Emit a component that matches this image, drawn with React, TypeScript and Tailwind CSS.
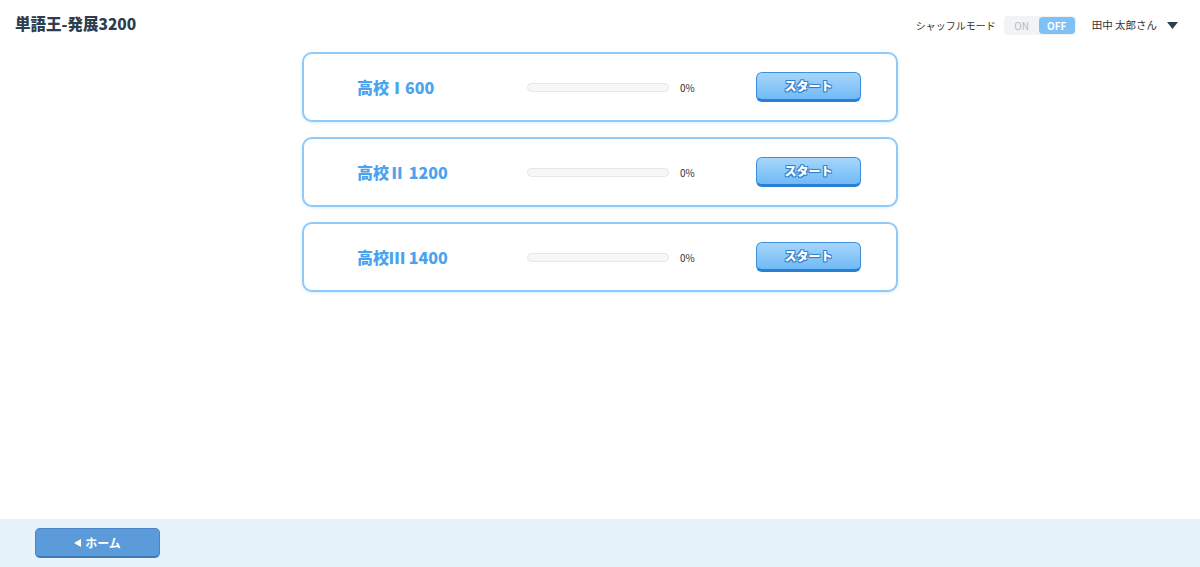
import { useState } from 'react';

const courses = [
  { label: '高校', numeral: 'Ⅰ', count: '600', progress: 0 },
  { label: '高校', numeral: 'Ⅱ', count: ' 1200', progress: 0 },
  { label: '高校', numeral: 'Ⅲ', count: ' 1400', progress: 0 },
];

function CourseCard({ label, numeral, count, progress }: { label: string; numeral: string; count: string; progress: number }) {
  return (
    <div className="h-[70px] rounded-[10px] border-2 border-[#90caf9] bg-white flex items-center shadow-[0_1px_3px_rgba(144,202,249,0.35)]">
      <div className="w-[223px] pl-[53px] text-[16px] font-black text-[#4aa3ee] whitespace-pre">
        {label}
        <span className="[font-feature-settings:'fwid'] font-['Noto_Sans_CJK_JP',serif]">{numeral}</span>
        {count}
      </div>
      <div className="w-[142px] h-[9px] rounded-full bg-[#f7f7f7] border border-[#e4e6e8] overflow-hidden">
        <div className="h-full bg-[#64b5f6]" style={{ width: `${progress}%` }} />
      </div>
      <div className="ml-[11px] w-[76px] text-[10px] text-[#333]">{progress}%</div>
      <button className="w-[105px] h-[30px] rounded-[6px] border border-[#3d8fdc] border-b-[3px] border-b-[#2a7fd4] bg-gradient-to-b from-[#a6d6fb] to-[#6fbaf5] flex items-center justify-center text-[12px] font-black text-white [text-shadow:_-1px_-1px_0_#2f7fd0,1px_-1px_0_#2f7fd0,-1px_1px_0_#2f7fd0,1px_1px_0_#2f7fd0,0_1px_1px_#2f7fd0]">
        スタート
      </button>
    </div>
  );
}

export default function App() {
  const [shuffle, setShuffle] = useState(false);

  return (
    <div className="w-[1200px] h-[567px] bg-white flex flex-col font-['Noto_Sans_CJK_JP','Noto_Sans',sans-serif] text-[#333]">
      <header className="h-[50px] flex items-center justify-between pl-[15px] pr-[22px]">
        <div className="text-[15.5px] font-black text-[#2c3e50] pb-[2px]">単語王-発展3200</div>
        <div className="flex items-center text-[10px]">
          <span className="text-[#333]">シャッフルモード</span>
          <div className="ml-[8px] flex items-center h-[19px] rounded-[4px] bg-[#f1f3f5] p-[1px]">
            <button
              onClick={() => setShuffle(true)}
              className={`w-[34px] h-[17px] rounded-[4px] text-[10px] ${shuffle ? 'bg-[#7ec1f7] text-white font-bold' : 'text-[#b6bcc2]'}`}
            >
              ON
            </button>
            <button
              onClick={() => setShuffle(false)}
              className={`w-[36px] h-[17px] rounded-[4px] text-[10px] ${!shuffle ? 'bg-[#7ec1f7] text-white font-bold' : 'text-[#b6bcc2]'}`}
            >
              OFF
            </button>
          </div>
          <span className="ml-[16px] text-[10.5px] text-[#333]">田中 太郎さん</span>
          <svg className="ml-[10px]" width="11" height="7" viewBox="0 0 11 7">
            <path d="M0 0h11L5.5 7z" fill="#2c3e50" />
          </svg>
        </div>
      </header>

      <main className="flex-1 flex flex-col items-center gap-[15px] pt-[2px]">
        {courses.map((c) => (
          <div key={c.numeral} className="w-[596px]">
            <CourseCard label={c.label} numeral={c.numeral} count={c.count} progress={c.progress} />
          </div>
        ))}
      </main>

      <footer className="h-[48px] bg-[#e6f3fb] flex items-center pl-[35px]">
        <button className="w-[125px] h-[30px] rounded-[5px] bg-[#5b9bd9] border border-[#4a86c5] border-b-2 border-b-[#3f7ab8] flex items-center justify-center gap-[4px] text-white text-[12px] font-bold">
          <svg width="7" height="8" viewBox="0 0 7 8">
            <path d="M7 0v8L0 4z" fill="white" />
          </svg>
          ホーム
        </button>
      </footer>
    </div>
  );
}
